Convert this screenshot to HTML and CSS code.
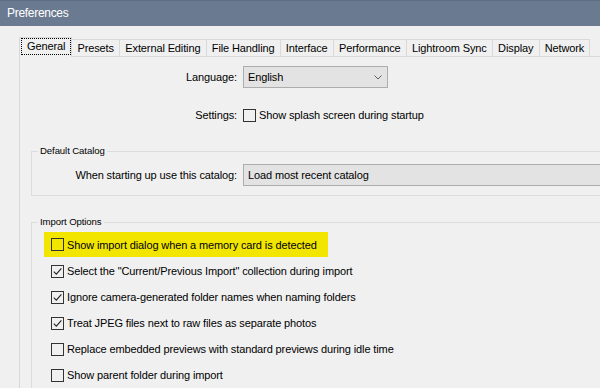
FILE: index.html
```html
<!DOCTYPE html>
<html>
<head>
<meta charset="utf-8">
<link rel="stylesheet" href="styles.css">
</head>
<body>
<div class="titlebar">Preferences</div>
<div class="dialog">
  <div class="tabs">
    <div class="tab active"><span class="focus">General</span></div>
    <div class="tab">Presets</div>
    <div class="tab">External Editing</div>
    <div class="tab">File Handling</div>
    <div class="tab">Interface</div>
    <div class="tab">Performance</div>
    <div class="tab">Lightroom Sync</div>
    <div class="tab">Display</div>
    <div class="tab">Network</div>
  </div>
  <div class="panel">
    <div class="field lang-row">
      <span class="label top-label">Language:</span>
      <div class="select lang-select">
        <span>English</span>
        <svg class="chevron" width="8" height="5" viewBox="0 0 8 5"><polyline points="0.5,0.5 4,4 7.5,0.5" fill="none" stroke="#606060" stroke-width="1"/></svg>
      </div>
    </div>
    <div class="field settings-row">
      <span class="label top-label">Settings:</span>
      <div class="check"><span class="box"></span><span>Show splash screen during startup</span></div>
    </div>
    <fieldset class="group catalog">
      <legend>Default Catalog</legend>
      <div class="field">
        <span class="label group-label">When starting up use this catalog:</span>
        <div class="select wide-select"><span>Load most recent catalog</span></div>
      </div>
    </fieldset>
    <fieldset class="group import">
      <legend>Import Options</legend>
      <div class="option highlight"><span class="box"></span><span>Show import dialog when a memory card is detected</span></div>
      <div class="option"><span class="box"><svg width="11" height="11" viewBox="0 0 11 11"><path d="M1.8 5.6 L4.3 8.1 L9.4 2.4" fill="none" stroke="#222" stroke-width="1.1"/></svg></span><span>Select the "Current/Previous Import" collection during import</span></div>
      <div class="option"><span class="box"><svg width="11" height="11" viewBox="0 0 11 11"><path d="M1.8 5.6 L4.3 8.1 L9.4 2.4" fill="none" stroke="#222" stroke-width="1.1"/></svg></span><span>Ignore camera-generated folder names when naming folders</span></div>
      <div class="option"><span class="box"><svg width="11" height="11" viewBox="0 0 11 11"><path d="M1.8 5.6 L4.3 8.1 L9.4 2.4" fill="none" stroke="#222" stroke-width="1.1"/></svg></span><span>Treat JPEG files next to raw files as separate photos</span></div>
      <div class="option"><span class="box"></span><span>Replace embedded previews with standard previews during idle time</span></div>
      <div class="option"><span class="box"></span><span>Show parent folder during import</span></div>
    </fieldset>
  </div>
</div>
</body>
</html>
```

FILE: styles.css
```css
html, body {
  margin: 0;
  padding: 0;
}
body {
  width: 600px;
  height: 388px;
  overflow: hidden;
  background: #f0f0f0;
  color: #000;
  font-family: "Liberation Sans", Arial, sans-serif;
  font-size: 11px;
  letter-spacing: -0.12px;
}
.titlebar {
  height: 26px;
  box-sizing: border-box;
  background: #6a7a91;
  border-top: 1px solid #5f6e84;
  color: #fff;
  font-size: 12px;
  letter-spacing: -0.3px;
  line-height: 24px;
  padding-left: 7px;
}
.dialog {
  padding: 11px 0 0 19px;
  height: 351px;
  overflow: hidden;
}
.tabs {
  display: flex;
  align-items: flex-end;
  height: 19px;
  position: relative;
  z-index: 1;
}
.tab {
  height: 16px;
  line-height: 16px;
  padding: 0 5.2px;
  border-top: 1px solid #d9d9d9;
  border-right: 1px solid #d9d9d9;
  white-space: nowrap;
}
.tab.active {
  height: 19px;
  padding: 0 1px 0 2px;
  border-left: 1px solid #d9d9d9;
  background: #f0f0f0;
  margin-bottom: -1px;
}
.focus {
  display: block;
  margin-top: 1px;
  height: 15px;
  line-height: 15px;
  padding: 0 5px;
  outline: 1px dotted #000;
  outline-offset: 0;
}
.panel {
  border-top: 1px solid #d9d9d9;
  border-left: 1px solid #d9d9d9;
}
.field {
  display: flex;
  align-items: center;
  gap: 6px;
}
.label {
  text-align: right;
  flex: none;
  white-space: nowrap;
}
.top-label {
  width: 217px;
}
.group-label {
  width: 199px;
}
.lang-row {
  margin-top: 9px;
}
.select {
  box-sizing: border-box;
  height: 22px;
  border: 1px solid #adadad;
  background: #e3e3e3;
  display: flex;
  align-items: center;
  padding-left: 4px;
  white-space: nowrap;
}
.lang-select {
  width: 145px;
  justify-content: space-between;
  padding-right: 5px;
}
.wide-select {
  flex: 1;
  min-width: 0;
  border-right: none;
}
.settings-row {
  margin-top: 16px;
  height: 22px;
}
.check {
  display: flex;
  align-items: center;
  gap: 3px;
  white-space: nowrap;
}
.box {
  box-sizing: border-box;
  width: 13px;
  height: 13px;
  border: 1px solid #333;
  flex: none;
  display: flex;
}
.group {
  margin: 0 0 0 11px;
  border: 1px solid #dcdcdc;
  border-right: none;
  padding: 0 0 0 6px;
  min-width: 0;
}
.group legend {
  padding: 0 2px;
  line-height: 14px;
  font-size: 9.6px;
  letter-spacing: -0.1px;
}
.catalog {
  margin-top: 18px;
  padding-top: 6px;
  padding-bottom: 9px;
}
.import {
  margin-top: 19px;
  padding-top: 3px;
  padding-bottom: 0;
  border-bottom: none;
}
.option {
  display: flex;
  align-items: center;
  gap: 3px;
  height: 26px;
  margin-left: 6px;
  padding-left: 7px;
  white-space: nowrap;
}
.option.highlight {
  width: 284px;
  height: 25px;
  margin-bottom: 1px;
  box-sizing: border-box;
  background: #f2e600;
}
```
